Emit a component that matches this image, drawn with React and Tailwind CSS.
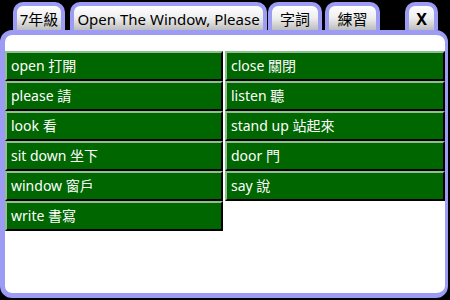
const tabs = [
  { label: '7年級', w: 'w-[52px]' },
  { label: 'Open The Window, Please', w: 'w-[197px]' },
  { label: '字詞', w: 'w-[54px]' },
  { label: '練習', w: 'w-[55px]' },
]

const words = [
  'open 打開', 'close 關閉',
  'please 請', 'listen 聽',
  'look 看', 'stand up 站起來',
  'sit down 坐下', 'door 門',
  'window 窗戶', 'say 說',
  'write 書寫',
]

const font = { fontFamily: '"Noto Sans", "Noto Sans CJK TC", sans-serif' }

function Tab({ label, w }) {
  return (
    <div className={`${w} h-[28px] rounded-t-[10px] border-[4px] border-b-0 border-[#9c9cf4] bg-gradient-to-b from-white via-[#eeeeee] to-[#bdbdbd] flex items-center justify-center text-[15px] text-black leading-none`}>
      <span className="whitespace-nowrap pt-[2px]">{label}</span>
    </div>
  )
}

export default function App() {
  return (
    <div className="w-[450px] h-[300px] bg-black overflow-hidden flex flex-col" style={font}>
      {/* tab strip */}
      <div className="h-[30px] flex items-end pl-[13px]">
        <Tab {...tabs[0]} />
        <div className="w-[5px]" />
        <Tab {...tabs[1]} />
        <div className="w-[1px]" />
        <Tab {...tabs[2]} />
        <div className="w-[3px]" />
        <Tab {...tabs[3]} />
        <div className="w-[25px]" />
        <div className="w-[33px] h-[28px] rounded-t-[10px] border-[4px] border-b-0 border-[#9c9cf4] bg-gradient-to-b from-white via-[#eeeeee] to-[#bdbdbd] flex items-center justify-center text-[16px] font-bold text-black leading-none">
          <span className="pt-[2px]">X</span>
        </div>
      </div>

      {/* panel */}
      <div className="w-[448px] h-[268px] rounded-[12px] border-l-[5px] border-t-[5px] border-r-[3px] border-b-[5px] border-[#9c9cf4] bg-white pt-[16px]">
        <div className="grid grid-cols-[218px_220px] gap-x-[2px]">
          {words.map((w) => (
            <div
              key={w}
              className="h-[30px] bg-[#006600] border-t-[2px] border-l-[2px] border-t-[#8fbf8f] border-l-[#8fbf8f] border-b-[2px] border-r-[2px] border-b-black border-r-black flex items-center pl-[4px] text-white text-[14px] leading-none"
            >
              {w}
            </div>
          ))}
        </div>
      </div>
    </div>
  )
}
